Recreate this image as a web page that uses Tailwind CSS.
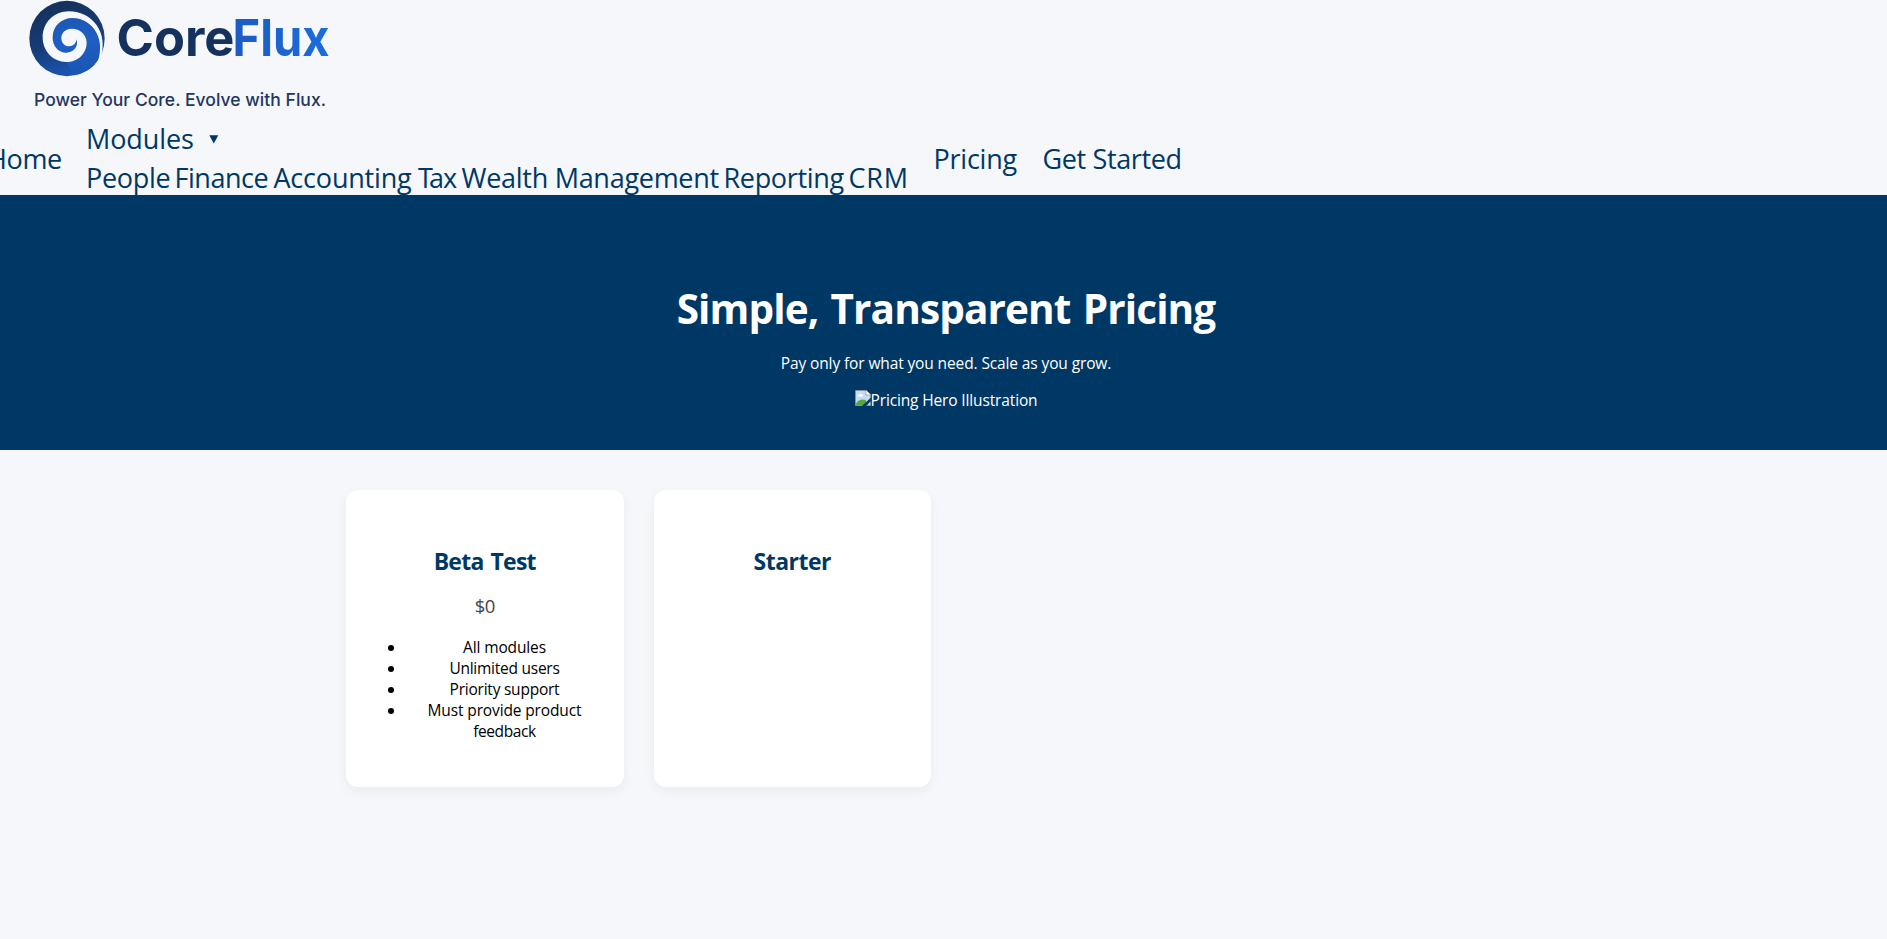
<!DOCTYPE html>
<html lang="en">
<head>
<meta charset="utf-8">
<title>CoreFlux Pricing</title>
<script src="https://cdn.jsdelivr.net/npm/@tailwindcss/browser@4"></script>
</head>
<body class="min-h-screen bg-[#f5f7fb] font-['Open_Sans',sans-serif] text-black overflow-x-hidden">
<div class="w-[1892px]">
  <header class="h-[195px]">
    <div class="h-[119px] pl-6">
      <svg class="block" width="320" height="119" viewBox="0 0 320 119">
        <defs>
          <linearGradient id="disc" gradientUnits="userSpaceOnUse" x1="105" y1="20" x2="170" y2="215">
            <stop offset="0" stop-color="#16335f"/><stop offset=".45" stop-color="#163a72"/><stop offset="1" stop-color="#1a56b4"/>
          </linearGradient>
          <linearGradient id="arm" gradientUnits="userSpaceOnUse" x1="130" y1="50" x2="170" y2="215">
            <stop offset="0" stop-color="#1c59b4"/><stop offset=".5" stop-color="#1e5fc4"/><stop offset="1" stop-color="#1a56b4"/>
          </linearGradient>
          <linearGradient id="flux" x1="0" y1="0" x2="1" y2="0">
            <stop offset="0" stop-color="#1c5bc4"/><stop offset="1" stop-color="#1b6ddd"/>
          </linearGradient>
        </defs>
        <g transform="scale(.33333)">
          <circle cx="129" cy="115.500" r="113" fill="url(#disc)"/>
          <path fill="url(#arm)" d="M227 168C236 104 195 54 146 54C112 54 86 78 86 113C86 138 103 158 127 158C148 158 164 140 158 118C170 100 188 110 188 128C188 160 162 186 127 186L150 226C190 219 218 195 227 168Z"/>
          <path fill="#f5f7fb" d="M222 184L229 178C256 98 205 34 135 34C88 34 56 70 56 112C56 155 88 186 127 186C162 186 188 160 188 128C188 104 168 86 143 86C124 86 112 99 112 114C112 129 122 139 135 139C148 139 156 130 158 118C164 140 148 158 127 158C103 158 86 138 86 113C86 78 112 54 146 54C195 54 247 104 222 184Z"/>
        </g>
        <g font-family="Inter, sans-serif">
          <text x="92.500" y="55.500" font-size="51" font-weight="700" textLength="118" lengthAdjust="spacingAndGlyphs" fill="#15315e">Core</text>
          <text x="208.500" y="55.500" font-size="51" font-weight="700" textLength="97" lengthAdjust="spacingAndGlyphs" fill="url(#flux)">Flux</text>
          <text x="10" y="106" font-size="17.500" font-weight="500" textLength="292" fill="#22365f">Power Your Core. Evolve with Flux.</text>
        </g>
      </svg>
    </div>
    <nav class="ml-[-13px] flex items-center text-[27px] leading-[39px] text-[#003865] whitespace-nowrap">
      <a class="w-[99px] tracking-[-.38px]">Home</a>
      <div>
        <div class="flex items-center"><span class="w-[122.500px] tracking-[-.1px]">Modules</span>
          <svg width="10" height="9" viewBox="0 0 10 9" class="mt-px"><path d="M.3.3h9L4.800 8.500z" fill="#003865"/></svg></div>
        <div class="flex">
          <a class="w-[88.500px] tracking-[-.3px]">People</a><a class="w-[99px] tracking-[-.47px]">Finance</a><a class="w-[144.500px] tracking-[-.2px]">Accounting</a><a class="w-[43.500px] tracking-[-1px]"><span class="tracking-[-4px]">T</span>ax</a><a class="w-[262px] tracking-[-.28px]">Wealth Management</a><a class="w-[125px] tracking-[-.33px]">Reporting</a><a class="w-[85px] tracking-[.8px]">CRM</a>
        </div>
      </div>
      <a class="w-[109px] tracking-[-.23px]">Pricing</a>
      <a class="tracking-[-.36px]">Get Started</a>
    </nav>
  </header>

  <section class="h-[255px] bg-[#003865] pt-[80px] text-center text-white">
    <h1 class="pt-[6px] text-[40.5px] leading-[56px] font-bold tracking-[-.88px] [word-spacing:2.500px]">Simple, Transparent Pricing</h1>
    <p class="mt-4 text-[15.5px] leading-[21px] tracking-[-.12px]">Pay only for what you need. Scale as you grow.</p>
    <div class="mt-4 flex justify-center text-[15.5px] leading-[21px] tracking-[-.14px]">
      <svg width="16" height="16" viewBox="0 0 16 16">
        <path d="M.5.500H11.500L15.500 4.500V15.500H.500Z" fill="#c6d9f5" stroke="#8b8f96"/>
        <path d="M11 0V5H16Z" fill="#fff" stroke="#8b8f96" stroke-width=".7"/>
        <path d="M2.500 6.200a1.600 1.600 0 0 1 1.700-1.700 1.900 1.900 0 0 1 3.300.4 1.300 1.300 0 0 1 .8 1.700H2.500z" fill="#fff"/>
        <path d="M1 15V13.500C3 10 7 8.500 10.500 10L13 15Z" fill="#55a83a"/>
        <path d="M7 16L16 7.500V11L11 16Z" fill="#003865"/>
      </svg><span>Pricing Hero Illustration</span>
    </div>
  </section>

  <main class="mx-auto grid w-[1200px] grid-cols-4 gap-[30px] pt-10 pb-10 text-center">
    <article class="h-[297px] rounded-xl bg-white px-[30px] pt-[55px] shadow-[0_4px_12px_rgba(0,0,0,0.05)]">
      <h3 class="text-[23px] leading-[32px] font-bold tracking-[-.72px] [word-spacing:1.500px] text-[#003865]">Beta Test</h3>
      <p class="mt-4 text-[18.5px] leading-[26px] tracking-[-.7px] text-[#444]">$0</p>
      <ul class="mt-[18px] list-none text-[15.5px] leading-[21px]">
        <li class="flex items-center"><span class="ml-[12px] size-1.5 rounded-full bg-black"></span><span class="ml-[21.500px] flex-1 tracking-[-.14px]">All modules</span></li>
        <li class="flex items-center"><span class="ml-[12px] size-1.5 rounded-full bg-black"></span><span class="ml-[21.500px] flex-1 tracking-[-.25px]">Unlimited users</span></li>
        <li class="flex items-center"><span class="ml-[12px] size-1.5 rounded-full bg-black"></span><span class="ml-[21.500px] flex-1 tracking-[-.23px]">Priority support</span></li>
        <li class="flex items-start"><span class="mt-[7.500px] ml-[12px] size-1.5 rounded-full bg-black"></span><span class="ml-[21.500px] flex-1 tracking-[-.13px]">Must provide product <span class="tracking-[-.38px]">feedback</span></span></li>
      </ul>
    </article>
    <article class="h-[297px] rounded-xl bg-white px-[30px] pt-[55px] shadow-[0_4px_12px_rgba(0,0,0,0.05)]">
      <h3 class="text-[23px] leading-[32px] font-bold tracking-[-.51px] text-[#003865]">Starter</h3>
    </article>
  </main>
</div>
</body>
</html>
